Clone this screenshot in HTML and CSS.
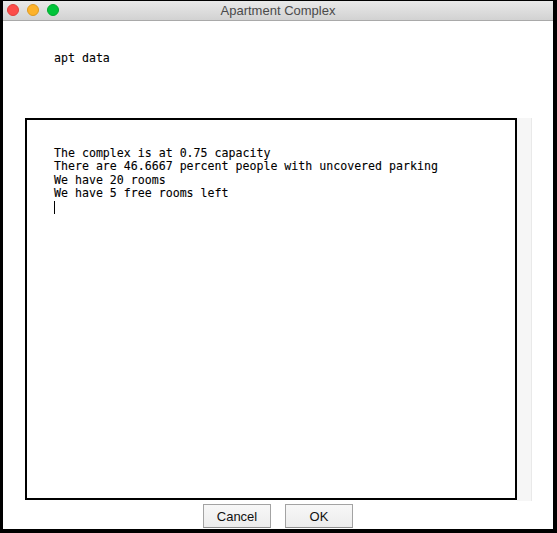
FILE: index.html
```html
<!DOCTYPE html>
<html>
<head>
<meta charset="utf-8">
<link rel="stylesheet" href="styles.css">
</head>
<body>
<div class="window">
  <div class="titlebar">
    <div class="lights">
      <span class="light red"></span>
      <span class="light yellow"></span>
      <span class="light green"></span>
    </div>
    <div class="title">Apartment Complex</div>
  </div>
  <div class="content">
    <div class="label">apt data</div>
    <div class="editor-row">
      <div class="editor">
        <div class="line">The complex is at 0.75 capacity</div>
        <div class="line">There are 46.6667 percent people with uncovered parking</div>
        <div class="line">We have 20 rooms</div>
        <div class="line">We have 5 free rooms left</div>
        <div class="line"><span class="caret"></span></div>
      </div>
      <div class="track"></div>
    </div>
    <div class="buttons">
      <button class="btn">Cancel</button>
      <button class="btn">OK</button>
    </div>
  </div>
</div>
</body>
</html>
```
FILE: styles.css
```css
html, body {
  margin: 0;
  padding: 0;
  background: #000;
}
.window {
  box-sizing: border-box;
  width: 557px;
  height: 533px;
  border-style: solid;
  border-color: #000;
  border-width: 1px 4px 4px 3px;
  background: #fff;
  display: flex;
  flex-direction: column;
}
.titlebar {
  position: relative;
  height: 19px;
  flex: none;
  background: linear-gradient(#e9e9e9, #d2d2d2);
  border-bottom: 1px solid #a9a9a9;
  display: flex;
  align-items: center;
  justify-content: center;
}
.lights {
  position: absolute;
  left: 4px;
  top: 3px;
  display: flex;
  gap: 8px;
}
.light {
  width: 12px;
  height: 12px;
  border-radius: 50%;
  box-sizing: border-box;
}
.red { background: #fc4c4a; border: 1px solid #e0403d; }
.yellow { background: #fdb22a; border: 1px solid #dd9a20; }
.green { background: #00c43a; border: 1px solid #00a82e; }
.title {
  font-family: "Liberation Sans", Arial, sans-serif;
  font-size: 13px;
  color: #4a4a4a;
  line-height: 19px;
}
.content {
  flex: 1;
  display: flex;
  flex-direction: column;
}
.label {
  box-sizing: border-box;
  font-family: "DejaVu Sans Mono", monospace;
  font-size: 11.6px;
  line-height: 13.4px;
  color: #000;
  padding: 30.5px 0 0 51px;
  height: 97px;
  -webkit-text-stroke: 0.1px #000;
}
.editor-row {
  display: flex;
  margin-left: 22px;
  height: 382px;
}
.editor {
  box-sizing: border-box;
  width: 492px;
  height: 382px;
  border: 2px solid #000;
  padding: 27px 0 0 27px;
  font-family: "DejaVu Sans Mono", monospace;
  font-size: 11.6px;
  line-height: 13.4px;
  color: #000;
  -webkit-text-stroke: 0.1px #000;
}
.line {
  height: 13.4px;
  white-space: pre;
}
.caret {
  display: inline-block;
  width: 1px;
  height: 13px;
  background: #000;
  vertical-align: top;
}
.track {
  width: 14px;
  height: 383px;
  background: #f6f6f6;
  border-right: 1px solid #e9e9e9;
}
.buttons {
  display: flex;
  justify-content: center;
  gap: 14px;
  margin-top: 4px;
}
.btn {
  box-sizing: border-box;
  width: 68px;
  height: 24px;
  margin: 0;
  padding: 0;
  border: 1px solid #a3a3a3;
  border-bottom-color: #8f8f8f;
  background: linear-gradient(#f7f7f7, #ececec);
  font-family: "Liberation Sans", Arial, sans-serif;
  font-size: 13px;
  color: #111;
  border-radius: 0;
}
```
